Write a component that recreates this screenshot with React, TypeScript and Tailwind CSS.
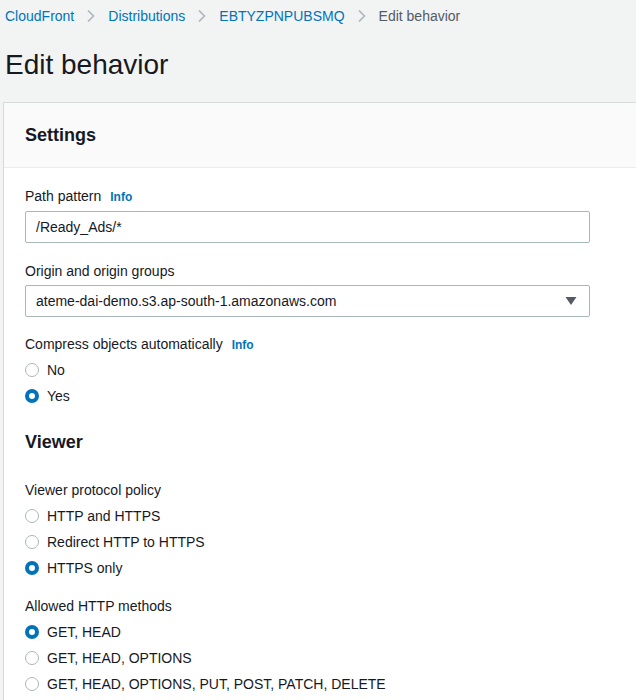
import React from "react"

const Crumb = ({ label, last }: { label: string; last?: boolean }) => (
    <>
        <span className={last ? "text-[#545b64]" : "text-[#0073bb]"}>{label}</span>
        {!last && (
            <svg width="10" height="14" viewBox="0 0 10 14" className="mx-[12px]">
                <path d="M2 1.5 L7.5 7 L2 12.5" fill="none" stroke="#aab7b8" strokeWidth="1.6" />
            </svg>
        )}
    </>
)

const Radio = ({ label, checked }: { label: string; checked?: boolean }) => (
    <div className="flex items-center h-[26px]">
        {checked
            ? <span className="w-[14px] h-[14px] rounded-full border-[4px] border-[#0073bb] bg-white box-border" />
            : <span className="w-[14px] h-[14px] rounded-full border-[1.5px] border-[#aab7b8] bg-white box-border" />}
        <span className="ml-[8px] text-[14px] text-[#16191f]">{label}</span>
    </div>
)

const Label = ({ text, info }: { text: string; info?: boolean }) => (
    <div className="flex items-baseline h-[22px] text-[14px] text-[#16191f]">
        {text}
        {info && <span className="ml-[9px] text-[12px] font-bold text-[#0073bb]">Info</span>}
    </div>
)

export default function App() {
    return <div className="min-h-[700px] bg-[#f2f3f3] text-[#16191f]" style={{ fontFamily: '"Liberation Sans", Arial, sans-serif' }}>
        <div className="flex items-center h-[32px] px-[5px] text-[14px]">
            <Crumb label="CloudFront" />
            <Crumb label="Distributions" />
            <Crumb label="EBTYZPNPUBSMQ" />
            <Crumb label="Edit behavior" last />
        </div>
        <h1 className="h-[70px] flex items-center px-[5px] text-[28px] leading-none pb-[4px]">Edit behavior</h1>

        <div className="ml-[3px] border-l border-t border-[#d5dbdb] bg-white">
            <div className="h-[65px] flex items-center px-[21px] bg-[#fafafa] border-b border-[#eaeded]">
                <h2 className="text-[18px] font-bold">Settings</h2>
            </div>
            <div className="px-[21px] pt-[18px] pb-[20px]">
                <Label text="Path pattern" info />
                <div className="mt-[3px] w-[565px] h-[32px] border border-[#aab7b8] rounded-[2px] flex items-center px-[10px] text-[14px]">/Ready_Ads/*</div>

                <div className="mt-[18px]"><Label text="Origin and origin groups" /></div>
                <div className="mt-[2px] w-[565px] h-[32px] border border-[#aab7b8] rounded-[2px] flex items-center justify-between pl-[10px] pr-[12px] text-[14px]">
                    <span>ateme-dai-demo.s3.ap-south-1.amazonaws.com</span>
                    <svg width="12" height="10" viewBox="0 0 12 10"><path d="M0.5 1 H11.5 L6 9 Z" fill="#545b64" /></svg>
                </div>

                <div className="mt-[17px]"><Label text="Compress objects automatically" info /></div>
                <div className="mt-[1px]">
                    <Radio label="No" />
                    <Radio label="Yes" checked />
                </div>

                <h2 className="mt-[21px] text-[18px] font-bold h-[24px] flex items-center">Viewer</h2>

                <div className="mt-[26px]"><Label text="Viewer protocol policy" /></div>
                <div className="mt-[1px]">
                    <Radio label="HTTP and HTTPS" />
                    <Radio label="Redirect HTTP to HTTPS" />
                    <Radio label="HTTPS only" checked />
                </div>

                <div className="mt-[15px]"><Label text="Allowed HTTP methods" /></div>
                <div className="mt-[1px]">
                    <Radio label="GET, HEAD" checked />
                    <Radio label="GET, HEAD, OPTIONS" />
                    <Radio label="GET, HEAD, OPTIONS, PUT, POST, PATCH, DELETE" />
                </div>
            </div>
        </div>
    </div>
}
